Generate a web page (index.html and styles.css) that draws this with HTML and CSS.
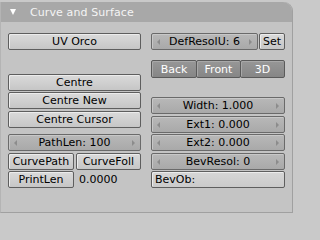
FILE: index.html
```html
<!DOCTYPE html>
<html>
<head>
<meta charset="utf-8">
<link rel="stylesheet" href="styles.css">
</head>
<body>
<div class="panel">
  <div class="header">
    <span class="tri"></span>
    <span class="title">Curve and Surface</span>
  </div>
  <div class="content">
    <div class="col left">
      <div class="btn r-uv">UV Orco</div>
      <div class="btn r-centre">Centre</div>
      <div class="btn r-cnew">Centre New</div>
      <div class="btn r-ccur">Centre Cursor</div>
      <div class="btn num r-path"><span class="arr l"></span>PathLen: 100<span class="arr r"></span></div>
      <div class="row r-cp">
        <div class="btn w66">CurvePath</div>
        <div class="btn w65">CurveFoll</div>
      </div>
      <div class="row r-pl">
        <div class="btn w66">PrintLen</div>
        <div class="label">0.0000</div>
      </div>
    </div>
    <div class="col right">
      <div class="row r-def">
        <div class="btn num wdef"><span class="arr l"></span>DefResolU: 6<span class="arr r"></span></div>
        <div class="btn wset">Set</div>
      </div>
      <div class="row r-view">
        <div class="btn dark wv1">Back</div>
        <div class="btn dark wv2">Front</div>
        <div class="btn dark wv3">3D</div>
      </div>
      <div class="btn num r-width"><span class="arr l"></span>Width: 1.000<span class="arr r"></span></div>
      <div class="btn num r-ext1"><span class="arr l"></span>Ext1: 0.000<span class="arr r"></span></div>
      <div class="btn num r-ext2"><span class="arr l"></span>Ext2: 0.000<span class="arr r"></span></div>
      <div class="btn num r-bev"><span class="arr l"></span>BevResol: 0<span class="arr r"></span></div>
      <div class="btn text r-bevob">BevOb:</div>
    </div>
  </div>
</div>
</body>
</html>
```

FILE: styles.css
```css
* { box-sizing: border-box; }
html, body { margin: 0; padding: 0; }
body {
  width: 296px;
  height: 215px;
  background: #c9c9c9;
  font-family: "DejaVu Sans", "Liberation Sans", sans-serif;
  font-size: 11px;
  color: #000;
  overflow: hidden;
}
.panel {
  margin-top: 2px;
  width: 293px;
  height: 211px;
  background: #c4c4c4;
  border-right: 1px solid #a0a0a0;
  border-bottom: 1px solid #a0a0a0;
  border-left: 1px solid #b4b4b4;
  border-top-right-radius: 9px;
}
.header {
  height: 20px;
  background: #a8a8a8;
  border-top-right-radius: 9px;
  display: flex;
  align-items: center;
  color: #f4f4f4;
}
.tri {
  margin-left: 9px;
  width: 0;
  height: 0;
  border-left: 3.5px solid transparent;
  border-right: 3.5px solid transparent;
  border-top: 6px solid #fff;
}
.title {
  margin-left: 14px;
  font-size: 11px;
  letter-spacing: 0.1px;
}
.content {
  display: flex;
  padding-left: 7px;
}
.col { display: flex; flex-direction: column; }
.left { width: 133px; }
.right { width: 134px; margin-left: 10px; }
.row { display: flex; height: 17px; }
.btn {
  height: 17px;
  border: 1px solid #5e5e5e;
  border-radius: 2px;
  background: linear-gradient(#dadada, #c6c6c6);
  box-shadow: inset 1px 1px 0 #ececec;
  display: flex;
  align-items: center;
  justify-content: center;
  white-space: nowrap;
  line-height: 1;
  position: relative;
}
.num {
  background: linear-gradient(#b8b8b8, #a9a9a9);
  box-shadow: inset 1px 1px 0 #c8c8c8;
  border-color: #6a6a6a;
}
.dark {
  background: linear-gradient(#979797, #868686);
  box-shadow: inset 1px 1px 0 #a8a8a8;
  color: #fff;
  border-color: #5a5a5a;
  height: 18px;
}
.text {
  justify-content: flex-start;
  padding-left: 3px;
  background: linear-gradient(#d6d6d6, #cacaca);
}
.arr {
  position: absolute;
  top: 5px;
  width: 0;
  height: 0;
  border-top: 3px solid transparent;
  border-bottom: 3px solid transparent;
}
.arr.l { left: 5px; border-right: 3px solid #8c8c8c; }
.arr.r { right: 5px; border-left: 3px solid #8c8c8c; }

.r-uv { margin-top: 11px; }
.r-centre { margin-top: 24px; }
.r-cnew { margin-top: 1px; }
.r-ccur { margin-top: 2px; }
.r-path { margin-top: 6px; }
.r-cp { margin-top: 2px; }
.r-pl { margin-top: 1px; }
.w66 { width: 66px; }
.w65 { width: 65px; margin-left: 2px; }
.label { margin-left: 5px; display: flex; align-items: center; }

.r-def { margin-top: 11px; }
.wdef { width: 107px; }
.wset { width: 26px; margin-left: 1px; }
.r-view { margin-top: 10px; height: 18px; }
.wv1 { width: 46px; }
.wv2 { width: 45px; margin-left: -1px; }
.wv3 { width: 45px; margin-left: -1px; }
.r-width { margin-top: 19px; }
.r-ext1 { margin-top: 2px; }
.r-ext2 { margin-top: 1px; }
.r-bev { margin-top: 2px; }
.r-bevob { margin-top: 1px; }
```
